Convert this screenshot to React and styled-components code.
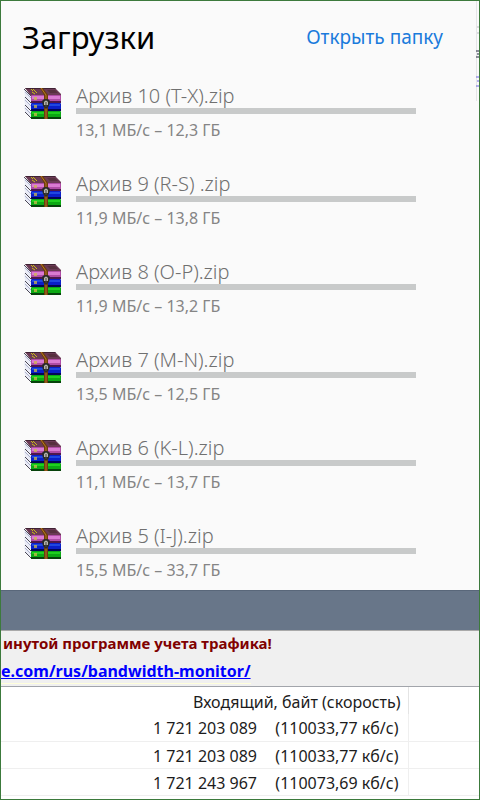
import styled, { createGlobalStyle } from 'styled-components';

const downloads = [
  { name: 'Архив 10 (T-X).zip', status: '13,1 МБ/с – 12,3 ГБ' },
  { name: 'Архив 9 (R-S) .zip', status: '11,9 МБ/с – 13,8 ГБ' },
  { name: 'Архив 8 (O-P).zip', status: '11,9 МБ/с – 13,2 ГБ' },
  { name: 'Архив 7 (M-N).zip', status: '13,5 МБ/с – 12,5 ГБ' },
  { name: 'Архив 6 (K-L).zip', status: '11,1 МБ/с – 13,7 ГБ' },
  { name: 'Архив 5 (I-J).zip', status: '15,5 МБ/с – 33,7 ГБ' },
];

const traffic = [
  { bytes: '1 721 203 089', speed: '(110033,77 кб/с)' },
  { bytes: '1 721 203 089', speed: '(110033,77 кб/с)' },
  { bytes: '1 721 243 967', speed: '(110073,69 кб/с)' },
];

const ArchiveIcon = () => (
  <Icon viewBox="0 0 38 31" aria-hidden="true">
    {/* page edges on the left */}
    <path d="M0 1 L7 8 V14 L1 9Z M0 9 L7 16 V22 L1 17Z M0 17 L7 24 V30 L1 24Z" fill="#e9ebf6" />
    <path d="M1 4 L7 10 M1 12 L7 18 M1 20 L7 26" stroke="#aeb3cc" />
    <path d="M0 1 L7 8 M1 9 L7 15 M1 17 L7 23 M1 24 L7 30" stroke="#4b4856" />
    {/* top cover */}
    <path d="M1 0 H31 L37 6 V8 H7Z" fill="#6b3a55" />
    <path d="M1 0 H31 L32 1 H2Z" fill="#3f2233" />
    <path d="M23 2 H31 L34 5 H26Z" fill="#57303f" />
    <path d="M7 1 L9 3 M9 1 L13 5 M8 4 L11 6" stroke="#c9bc16" />
    {/* spines */}
    <rect x="7" y="7" width="30" height="8" rx="1" fill="#b04ca6" />
    <rect x="8" y="8" width="28" height="3" fill="#da7bd2" />
    <rect x="7" y="13" width="30" height="2" fill="#4e184d" />
    <rect x="7" y="15" width="30" height="8" rx="1" fill="#0a1fc8" />
    <rect x="8" y="16" width="28" height="2" fill="#2047e0" />
    <rect x="7" y="21" width="30" height="2" fill="#030656" />
    <rect x="7" y="23" width="30" height="8" rx="1" fill="#0ba813" />
    <rect x="8" y="24" width="28" height="2" fill="#1fd020" />
    <rect x="7" y="29" width="30" height="2" fill="#06420b" />
    <path d="M10 9 H13 V12 H10Z M10 17 H13 V20 H10Z M10 25 H13 V28 H10Z" fill="#cdb84c" opacity=".75" />
    {/* strap and buckle */}
    <path d="M16 0 H19 L24 7 V31 H20 V7Z" fill="#6b3d0c" />
    <path d="M17 0 L22 7 V31" fill="none" stroke="#b77725" />
    <path d="M18 14 Q18 11 22 11 Q26 11 26 14 L25 18 L22 21 L19 18Z" fill="#2a2a2a" />
    <path d="M20 14 Q22 11 24 14 V17 H20Z" fill="#b4b4ac" />
    <path d="M22 14 V19" stroke="#4b4840" />
  </Icon>
);

export default function App() {
  return (
    <>
      <GlobalStyle />
      <Page>
        <Downloads>
          <DownloadsHeader>
            <Title>Загрузки</Title>
            <FolderLink href="#folder">Открыть папку</FolderLink>
          </DownloadsHeader>
          <List>
            {downloads.map((item) => (
              <Download key={item.name}>
                <ArchiveIcon />
                <DownloadInfo>
                  <FileName>{item.name}</FileName>
                  <Track />
                  <Status>{item.status}</Status>
                </DownloadInfo>
              </Download>
            ))}
          </List>
          <WindowEdge viewBox="0 0 3 100" aria-hidden="true">
            <path d="M0 0 V100" stroke="#cfcfd6" />
            <path d="M1 26 H3 M1 32 H3" stroke="#b9bcc0" />
            <path d="M0 50 H3 M1 53 H3 M0 56 H3" stroke="#20243c" />
            <path d="M0 76 H3 M1 80 H3 M0 85 H3" stroke="#6a66e0" />
          </WindowEdge>
        </Downloads>
        <Divider />
        <Notice>
          <NoticeText>инутой программе учета трафика!</NoticeText>
          <NoticeLink href="#bandwidth-monitor">e.com/rus/bandwidth-monitor/</NoticeLink>
        </Notice>
        <Traffic>
          <colgroup>
            <BytesCol />
            <SpeedCol />
            <col />
          </colgroup>
          <thead>
            <tr>
              <HeadCell colSpan="2">Входящий, байт (скорость)</HeadCell>
              <EmptyCell />
            </tr>
          </thead>
          <tbody>
            {traffic.map((row, i) => (
              <tr key={i}>
                <BytesCell>{row.bytes}</BytesCell>
                <SpeedCell>{row.speed}</SpeedCell>
                <EmptyCell $line />
              </tr>
            ))}
          </tbody>
        </Traffic>
      </Page>
    </>
  );
}

const GlobalStyle = createGlobalStyle`
  * {
    box-sizing: border-box;
  }
  body {
    margin: 0;
    background: #fff;
    font-family: 'Noto Sans', sans-serif;
  }
`;

const Page = styled.main`
  min-height: 100vh;
  border: 1px solid #3c7a3c;
`;

const Downloads = styled.section`
  position: relative;
  padding: 16px 36px 0 21px;
  background: #fafafa;
`;

const DownloadsHeader = styled.header`
  display: flex;
  align-items: center;
  justify-content: space-between;
  height: 40px;
`;

const Title = styled.h1`
  margin: 0;
  color: #000;
  font-size: 31px;
  font-weight: 400;
  line-height: 40px;
`;

const FolderLink = styled.a`
  color: #1a7bdc;
  font-size: 19px;
  line-height: 24px;
  text-decoration: none;
`;

const List = styled.ul`
  margin: 0;
  padding: 27px 27px 0 1px;
  list-style: none;
`;

const Download = styled.li`
  display: flex;
  gap: 14px;
  height: 88px;
  &:last-child {
    height: 66px;
  }
`;

const Icon = styled.svg`
  flex: none;
  width: 38px;
  height: 31px;
  margin: 4px 0 0 1px;
`;

const DownloadInfo = styled.div`
  flex: 1;
`;

const FileName = styled.div`
  color: #707070;
  font-size: 20px;
  font-weight: 300;
  line-height: 24px;
`;

const Track = styled.div`
  height: 6px;
  background: #c8caca;
`;

const Status = styled.div`
  margin-top: 4px;
  color: #858585;
  font-size: 16px;
  line-height: 24px;
`;

const WindowEdge = styled.svg`
  position: absolute;
  top: 0;
  right: 0;
  width: 3px;
  height: 100px;
`;

const Divider = styled.div`
  height: 41px;
  background: #687689;
  border-top: 1px solid #59677a;
  border-bottom: 1px solid #a9a9a9;
`;

const Notice = styled.section`
  display: flex;
  flex-direction: column;
  align-items: flex-start;
  height: 56px;
  background: #f0f0f0;
  border-bottom: 1px solid #a2a5ab;
  font-weight: 700;
  line-height: 24px;
`;

const NoticeText = styled.p`
  margin: 0;
  padding-left: 2px;
  color: #800000;
  font-size: 15px;
`;

const NoticeLink = styled.a`
  margin-top: 4px;
  color: #0000ff;
  font-size: 16px;
  border-bottom: 1px solid #ffffdc;
`;

const Traffic = styled.table`
  width: 100%;
  border-collapse: collapse;
  table-layout: fixed;
  color: #1c1c1c;
  font-size: 16px;
  line-height: 24px;
  white-space: nowrap;
`;

const BytesCol = styled.col`
  width: 256px;
`;

const SpeedCol = styled.col`
  width: 151px;
`;

const HeadCell = styled.th`
  height: 27px;
  padding: 2px 7px 0 0;
  border-right: 1px solid #e4e4e4;
  font-weight: 400;
  text-align: right;
`;

const EmptyCell = styled.td`
  padding: 0;
  border-bottom: ${(props) => (props.$line ? '1px solid #efefef' : 'none')};
`;

const BytesCell = styled.td`
  height: 27px;
  padding: 2px 0 0;
  border-bottom: 1px solid #efefef;
  text-align: right;
`;

const SpeedCell = styled.td`
  height: 27px;
  padding: 2px 9px 0 0;
  border-right: 1px solid #efefef;
  border-bottom: 1px solid #efefef;
  text-align: right;
`;
